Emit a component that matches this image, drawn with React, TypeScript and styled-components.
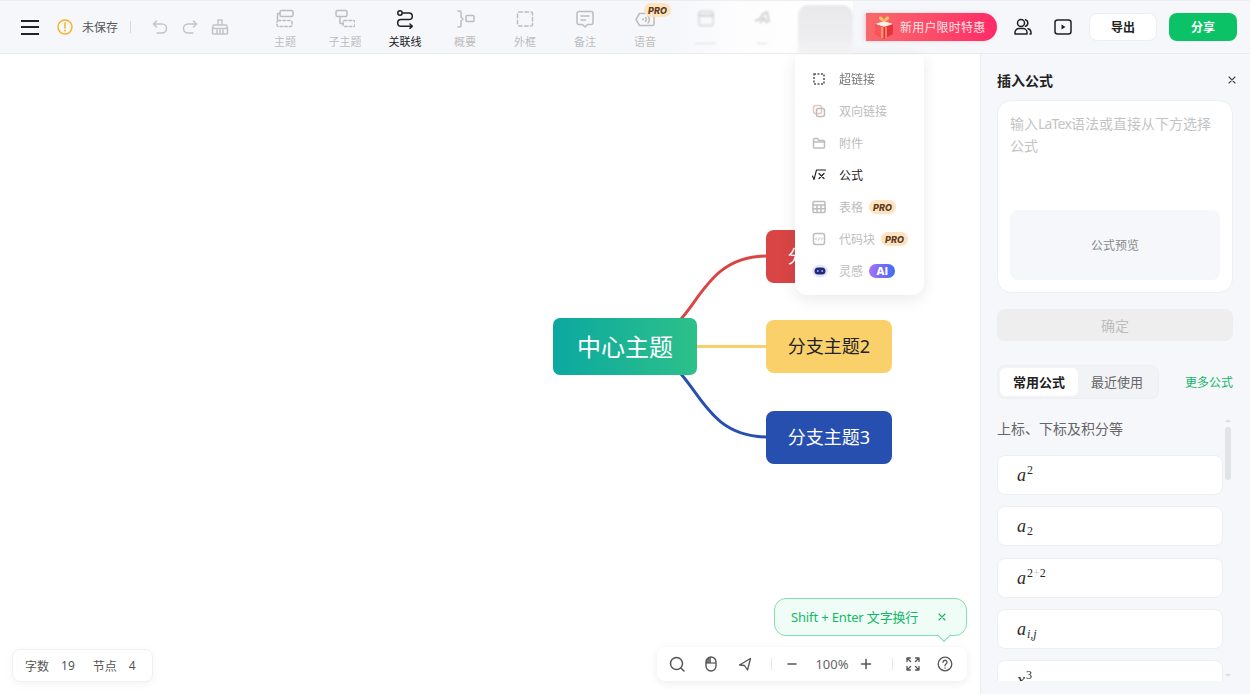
import { ReactNode } from "react";
import styled, { createGlobalStyle } from "styled-components";

const GlobalStyle = createGlobalStyle`
  html, body {
    margin: 0;
    padding: 0;
    background: #fff;
  }
  * {
    box-sizing: border-box;
  }
  body {
    font-family: "Noto Sans", "Noto Sans CJK SC", sans-serif;
    color: #222;
  }
`;

const Page = styled.div`
  width: 1250px;
  height: 694px;
  display: flex;
  flex-direction: column;
  overflow: hidden;
`;

const Header = styled.header`
  height: 54px;
  flex: none;
  display: flex;
  align-items: stretch;
  padding-right: 13px;
  background: #f6f7fb;
  border-top: 1px solid #eceef1;
  border-bottom: 1px solid #e9ebef;
`;

const LeftGroup = styled.div`
  width: 255px;
  flex: none;
  display: flex;
  align-items: center;
  padding: 0 0 0 21px;
`;

const MenuButton = styled.div`
  width: 18px;
  height: 15px;
  margin-right: 18px;
  border-top: 2px solid #222;
  border-bottom: 2px solid #222;
  position: relative;

  &::after {
    content: "";
    position: absolute;
    left: 0;
    right: 0;
    top: 4.5px;
    height: 2px;
    background: #222;
  }
`;

const SaveText = styled.span`
  font-size: 12px;
  color: #555;
  margin-left: 9px;
`;

const Divider = styled.span`
  width: 1px;
  height: 12px;
  background: #d5d7dc;
  margin: 0 20px 0 12px;
`;

const HistoryIcons = styled.div`
  display: flex;
  gap: 12px;
  color: #c4c4c4;
`;

const Tools = styled.div`
  display: flex;
`;

const ToolItem = styled.div<{ $active?: boolean; $blurred?: boolean }>`
  width: ${(p) => (p.$blurred ? "57px" : "60px")};
  flex: none;
  position: relative;
  display: flex;
  flex-direction: column;
  align-items: center;
  padding-top: 8px;
  color: ${(p) => (p.$active ? "#222" : "#bdbdbd")};
  font-size: 11px;
  line-height: 16px;
  filter: ${(p) => (p.$blurred ? "blur(1.2px)" : "none")};
  opacity: ${(p) => (p.$blurred ? 0.6 : 1)};

  svg {
    margin-bottom: 5px;
  }
`;

const ToolLabel = styled.span`
  display: block;
`;

const ProBadge = styled.span`
  display: inline-flex;
  align-items: center;
  justify-content: center;
  width: 27px;
  height: 14px;
  border-radius: 7px;
  background: #fde3c0;
  color: #5b3a1e;
  font-size: 9px;
  font-style: italic;
  font-weight: 800;
  line-height: 1;
  font-family: "Inter", "Noto Sans", sans-serif;
`;

const FloatingBadge = styled(ProBadge)`
  position: absolute;
  top: 2px;
  left: 29px;
`;

const FadeZone = styled.div`
  display: flex;
  width: 178px;
  flex: none;
  background: linear-gradient(90deg, #f6f7fb 0%, #fdfdfe 38%, #fff 100%);
`;

const FadeItems = styled.div`
  display: flex;
  width: 123px;
  flex: none;
  padding-left: 2px;
`;

const GhostTile = styled.div`
  width: 55px;
  height: 49px;
  margin-top: 4px;
  flex: none;
  border-radius: 10px 10px 0 0;
  background: linear-gradient(180deg, #e9e9eb 0%, #eeeef0 70%, #f6f6f7 100%);
  filter: blur(1px);
`;

const RightGroup = styled.div`
  margin-left: auto;
  display: flex;
  align-items: center;
`;

const Promo = styled.div`
  width: 131px;
  height: 28px;
  position: relative;
  display: flex;
  align-items: center;
  padding-left: 34px;
  border-radius: 0 14px 14px 0;
  background: linear-gradient(90deg, #f7696c 0%, #fd4f69 45%, #ff2a68 100%);
  box-shadow: -2px 0 4px rgba(247, 105, 108, 0.25);
  color: #ffe4e6;
  font-size: 12px;
  letter-spacing: 0.2px;
  white-space: nowrap;

  svg {
    position: absolute;
    left: 6px;
    top: 1px;
  }
`;

const IconSlot = styled.div`
  width: 40px;
  display: flex;
  justify-content: center;
  color: #222;
`;

const HeaderIcons = styled.div`
  display: flex;
  margin: 0 6px 0 6px;
`;

const ExportButton = styled.button`
  width: 68px;
  height: 28px;
  border: 1px solid #eceef1;
  border-radius: 8px;
  background: #fff;
  color: #222;
  font: 700 12px "Noto Sans", "Noto Sans CJK SC", sans-serif;
  padding: 0;
`;

const ShareButton = styled(ExportButton)`
  margin-left: 12px;
  border: none;
  background: #0bc267;
  color: #fff;
`;

const Body = styled.main`
  flex: 1;
  min-height: 0;
  display: flex;
`;

const Canvas = styled.section`
  flex: 1;
  position: relative;
  background: #fff;
`;

const Connectors = styled.svg`
  position: absolute;
  left: 0;
  top: 0;
  width: 980px;
  height: 640px;
`;

const CenterNode = styled.div`
  position: absolute;
  left: 553px;
  top: 264px;
  width: 144px;
  height: 57px;
  padding-bottom: 2px;
  border-radius: 7px;
  display: flex;
  align-items: center;
  justify-content: center;
  background: linear-gradient(90deg, #0ca8a1 0%, #2dc089 100%);
  color: #fff;
  font-size: 24px;
`;

const BranchNode = styled.div<{ $top: number; $bg: string; $fg: string }>`
  position: absolute;
  left: 766px;
  top: ${(p) => p.$top}px;
  width: 126px;
  height: 53px;
  padding-bottom: 3px;
  border-radius: 8px;
  display: flex;
  align-items: center;
  justify-content: center;
  background: ${(p) => p.$bg};
  color: ${(p) => p.$fg};
  font-size: 18px;
`;

const StatusBar = styled.div`
  position: absolute;
  left: 12px;
  bottom: 12px;
  height: 33px;
  width: 141px;
  display: flex;
  align-items: center;
  padding-left: 12px;
  background: #fff;
  border: 1px solid #f0f1f3;
  border-radius: 8px;
  box-shadow: 0 2px 8px rgba(0, 0, 0, 0.05);
  font-size: 12px;
  color: #555;
  white-space: nowrap;
`;

const StatValue = styled.span`
  margin: 0 18px 0 12px;
`;

const ZoomBar = styled.div`
  position: absolute;
  left: 657px;
  top: 593px;
  width: 310px;
  height: 34px;
  display: flex;
  align-items: center;
  padding-left: 12px;
  background: #fff;
  border-radius: 8px;
  box-shadow: 0 2px 10px rgba(0, 0, 0, 0.08);
  color: #555;
`;

const ZoomIcon = styled.span<{ $gap?: number }>`
  display: flex;
  flex: none;
  width: 16px;
  justify-content: center;
  margin-right: ${(p) => p.$gap ?? 18}px;
`;

const ZoomDivider = styled.span`
  width: 1px;
  height: 12px;
  flex: none;
  background: #e4e5e8;
  margin-right: 12px;
`;

const ZoomValue = styled.span`
  width: 36px;
  flex: none;
  margin-right: 8px;
  font-size: 13px;
  color: #666;
  text-align: center;
`;

const Hint = styled.div`
  position: absolute;
  left: 774px;
  top: 544px;
  width: 193px;
  height: 38px;
  display: flex;
  align-items: center;
  justify-content: space-between;
  padding: 0 20px 0 16px;
  background: #effdf6;
  border: 1px solid #82dfb0;
  border-radius: 12px;
  color: #14b76a;
  font-size: 13px;
  letter-spacing: -0.15px;
  white-space: nowrap;

  span {
    margin-top: -2px;
  }

  &::after {
    content: "";
    position: absolute;
    left: 164px;
    bottom: -5px;
    width: 9px;
    height: 9px;
    transform: rotate(45deg);
    background: #effdf6;
    border-right: 1px solid #82dfb0;
    border-bottom: 1px solid #82dfb0;
  }
`;

const Dropdown = styled.div`
  position: absolute;
  left: 795px;
  top: 1px;
  width: 129px;
  height: 240px;
  padding: 8px 0;
  background: #fff;
  border-radius: 0 0 12px 12px;
  box-shadow: 0 4px 16px rgba(0, 0, 0, 0.09);
`;

const DropItem = styled.div<{ $active?: boolean; $blurred?: boolean }>`
  height: 32px;
  display: flex;
  align-items: center;
  padding-left: 17px;
  font-size: 12px;
  color: ${(p) => (p.$active ? "#222" : "#bdbdbd")};

  > svg {
    flex: none;
    margin-right: 13px;
    ${(p) => p.$blurred && "filter: blur(0.5px);"}
  }
`;

const DropLabel = styled.span<{ $blurred?: boolean }>`
  margin-right: 6px;
  ${(p) => p.$blurred && "filter: blur(0.7px); color: #777;"}
`;

const AiBadge = styled.span`
  display: inline-flex;
  align-items: center;
  justify-content: center;
  width: 26px;
  height: 14px;
  border-radius: 7px;
  background: linear-gradient(90deg, #a871f5 0%, #3f6cf6 100%);
  color: #fff;
  font: 800 11px "Inter", sans-serif;
`;

const Panel = styled.aside`
  width: 270px;
  flex: none;
  display: flex;
  flex-direction: column;
  padding: 0 17px 13px 16px;
  background: #f6f7fb;
  border-left: 1px solid #ebecf0;
`;

const PanelHead = styled.div`
  height: 46px;
  flex: none;
  display: flex;
  align-items: center;
  justify-content: space-between;
  padding-top: 6px;
`;

const PanelTitle = styled.h2`
  margin: 0;
  font-size: 14px;
  font-weight: 700;
  color: #222;
`;

const CloseMark = styled.span`
  display: flex;
  color: #444;
  margin: 0 -3px 0 0;
`;

const EditorCard = styled.div`
  height: 193px;
  flex: none;
  display: flex;
  flex-direction: column;
  justify-content: space-between;
  padding: 12px;
  background: #fff;
  border: 1px solid #eeeff2;
  border-radius: 14px;
`;

const Placeholder = styled.div`
  font-size: 14px;
  line-height: 22px;
  color: #c4c4c4;
`;

const LatinRun = styled.span`
  letter-spacing: -0.8px;
`;

const Preview = styled.div`
  height: 70px;
  display: flex;
  align-items: center;
  justify-content: center;
  background: #f6f7fb;
  border-radius: 8px;
  font-size: 12px;
  color: #8a8a8a;
`;

const ConfirmButton = styled.button`
  height: 32px;
  flex: none;
  margin-top: 16px;
  border: none;
  border-radius: 8px;
  background: #eeeeee;
  color: #bdbdbd;
  font: 14px "Noto Sans", "Noto Sans CJK SC", sans-serif;
`;

const TabsRow = styled.div`
  margin-top: 24px;
  flex: none;
  display: flex;
  align-items: center;
  justify-content: space-between;
`;

const Tabs = styled.div`
  width: 162px;
  height: 34px;
  display: flex;
  padding: 2px;
  background: #f2f3f6;
  border: 1px solid #eeeff2;
  border-radius: 8px;
`;

const Tab = styled.div<{ $active?: boolean }>`
  width: 78px;
  display: flex;
  align-items: center;
  justify-content: center;
  padding-bottom: 1px;
  border-radius: 6px;
  font-size: 13px;
  font-weight: ${(p) => (p.$active ? 700 : 400)};
  color: ${(p) => (p.$active ? "#222" : "#666")};
  background: ${(p) => (p.$active ? "#fff" : "transparent")};
`;

const MoreLink = styled.span`
  font-size: 12px;
  color: #12b76a;
`;

const FormulaArea = styled.div`
  flex: 1;
  min-height: 0;
  position: relative;
  overflow: hidden;
  margin-top: 20px;
`;

const SectionTitle = styled.div`
  font-size: 14px;
  line-height: 20px;
  color: #666;
  margin-bottom: 16px;
`;

const FormulaList = styled.div`
  width: 226px;
  display: flex;
  flex-direction: column;
  gap: 11.3px;
`;

const FormulaCard = styled.div`
  height: 40px;
  flex: none;
  display: flex;
  align-items: baseline;
  padding: 7px 0 0 19px;
  background: #fff;
  border: 1px solid #eeeff2;
  border-radius: 8px;
  font-family: "Liberation Serif", serif;
  font-size: 18px;
  line-height: 24px;
  color: #2a2a2a;
`;

const MathVar = styled.i`
  font-style: italic;
`;

const Sup = styled.span`
  font-size: 12px;
  line-height: 0;
  position: relative;
  top: -7px;
  margin-left: 1px;
`;

const Sub = styled.span`
  font-size: 12px;
  line-height: 0;
  position: relative;
  top: 3px;
  margin-left: 1px;
`;

const FaintPlus = styled.span`
  color: #ccc;
`;

const ScrollTrack = styled.div`
  position: absolute;
  top: 0;
  right: 2px;
  width: 6px;
  height: 100%;
`;

const ScrollThumb = styled.div`
  position: absolute;
  top: 8px;
  width: 6px;
  height: 53px;
  border-radius: 3px;
  background: #e2e3e6;
`;

const ScrollArrow = styled.div<{ $down?: boolean }>`
  position: absolute;
  left: 0;
  ${(p) => (p.$down ? "bottom: 4px;" : "top: 0;")}
  width: 0;
  height: 0;
  border-left: 3px solid transparent;
  border-right: 3px solid transparent;
  ${(p) =>
    p.$down ? "border-top: 3px solid #dcdde0;" : "border-bottom: 3px solid #dcdde0;"}
`;

type IconProps = { size?: number; children: ReactNode };

const Icon = ({ size = 20, children }: IconProps) => (
  <svg
    width={size}
    height={size}
    viewBox={`0 0 ${size} ${size}`}
    fill="none"
    stroke="currentColor"
    strokeWidth="1.5"
    strokeLinecap="round"
    strokeLinejoin="round"
  >
    {children}
  </svg>
);

const toolItems: { label: string; active?: boolean; pro?: boolean; icon: ReactNode }[] = [
  {
    label: "主题",
    icon: (
      <Icon>
        <rect x="5" y="1.5" width="13" height="6" rx="1.5" />
        <rect x="2" y="11.5" width="15" height="6" rx="1.5" strokeDasharray="2.5 2" />
        <path d="M5 4.5H2.500V11" />
      </Icon>
    ),
  },
  {
    label: "子主题",
    icon: (
      <Icon>
        <rect x="1" y="1.500" width="11" height="6" rx="1.500" />
        <rect x="8" y="11.500" width="12" height="6" rx="1.500" strokeDasharray="2.500 2" />
        <path d="M5 7.500V14.500H8" />
      </Icon>
    ),
  },
  {
    label: "关联线",
    active: true,
    icon: (
      <Icon>
        <circle cx="5" cy="4" r="2.200" />
        <path d="M7.200 4H14a3.300 3.300 0 0 1 0 6.600H6a3.300 3.300 0 0 0 0 6.600h11" />
        <path d="M15 15l2.200 2.200L15 19.400" />
      </Icon>
    ),
  },
  {
    label: "概要",
    icon: (
      <Icon>
        <path d="M3 2h1.500a1.500 1.500 0 0 1 1.500 1.500V8l2 2-2 2v4.500a1.500 1.500 0 0 1-1.500 1.500H3" />
        <rect x="11" y="6.500" width="8" height="6" rx="1" />
      </Icon>
    ),
  },
  {
    label: "外框",
    icon: (
      <Icon>
        <rect x="2.500" y="3" width="15" height="14" rx="1.500" strokeDasharray="3.500 2.500" />
      </Icon>
    ),
  },
  {
    label: "备注",
    icon: (
      <Icon>
        <path d="M4 2.500h12a2 2 0 0 1 2 2v9a2 2 0 0 1-2 2h-3.500L10 18l-2.500-2.500H4a2 2 0 0 1-2-2v-9a2 2 0 0 1 2-2z" />
        <path d="M6 7h8M6 11h4.500" />
      </Icon>
    ),
  },
  {
    label: "语音",
    pro: true,
    icon: (
      <Icon>
        <path d="M4.500 4.500h13a1.500 1.500 0 0 1 1.500 1.500v9a1.500 1.500 0 0 1-1.500 1.500h-13L1 10.500z" />
        <circle cx="8" cy="10.500" r="0.400" />
        <path d="M10.500 8.500a3 3 0 0 1 0 4M13 7a5.500 5.500 0 0 1 0 7" />
      </Icon>
    ),
  },
];

const dropItems: {
  label: string;
  active?: boolean;
  blurred?: boolean;
  badge?: "pro" | "ai";
  icon: ReactNode;
}[] = [
  {
    label: "超链接",
    blurred: true,
    icon: (
      <svg width="14" height="14" viewBox="0 0 14 14" fill="none" stroke="#555" strokeWidth="1.500">
        <rect x="2" y="2" width="10" height="10" strokeDasharray="2 1.500" />
      </svg>
    ),
  },
  {
    label: "双向链接",
    icon: (
      <Icon size={14}>
        <rect x="1.500" y="1.500" width="8" height="8" rx="2" stroke="#e6c9b5" />
        <rect x="4.500" y="4.500" width="8" height="8" rx="2" />
      </Icon>
    ),
  },
  {
    label: "附件",
    icon: (
      <Icon size={14}>
        <path d="M1.500 3.500a1 1 0 0 1 1-1h3l1.500 2h4.500a1 1 0 0 1 1 1v5.500a1 1 0 0 1-1 1h-9a1 1 0 0 1-1-1z" />
        <path d="M1.500 6h11" />
      </Icon>
    ),
  },
  {
    label: "公式",
    active: true,
    icon: (
      <Icon size={14}>
        <path d="M0.500 8l1.500 3.500L4.500 2H14" strokeWidth="1.100" />
        <path d="M7 5.500l5 5M12 5.500l-5 5" strokeWidth="1.200" />
      </Icon>
    ),
  },
  {
    label: "表格",
    badge: "pro",
    icon: (
      <Icon size={14}>
        <rect x="1" y="1.500" width="12" height="11" rx="1" />
        <path d="M1 5h12M1 8.800h12M5 5v7.500M9 5v7.500" />
      </Icon>
    ),
  },
  {
    label: "代码块",
    badge: "pro",
    icon: (
      <Icon size={14}>
        <rect x="1.500" y="1.500" width="11" height="11" rx="2" />
        <path d="M4.500 6L3.500 7l1 1M9.500 6l1 1-1 1M7.700 5.800L6.400 8.200" strokeWidth="1" />
      </Icon>
    ),
  },
  {
    label: "灵感",
    badge: "ai",
    icon: (
      <svg width="16" height="14" viewBox="0 0 16 14" style={{ marginRight: 11 }}>
        <ellipse cx="8" cy="7" rx="8" ry="6.500" fill="#e6e6fa" />
        <rect x="2.500" y="3.500" width="11" height="7" rx="3.500" fill="#232a7c" />
        <circle cx="5.800" cy="7" r="1" fill="#8fb0ff" />
        <circle cx="10.200" cy="7" r="1" fill="#8fb0ff" />
      </svg>
    ),
  },
];

const App = () => {
  return (
    <Page>
      <GlobalStyle />
      <Header>
        <LeftGroup>
          <MenuButton />
          <svg width="16" height="16" viewBox="0 0 16 16" fill="none">
            <circle cx="8" cy="8" r="7" stroke="#f5b21f" strokeWidth="1.400" />
            <path d="M8 4v5" stroke="#f5b21f" strokeWidth="1.500" strokeLinecap="round" />
            <circle cx="8" cy="11.500" r="0.900" fill="#f5b21f" />
          </svg>
          <SaveText>未保存</SaveText>
          <Divider />
          <HistoryIcons>
            <Icon size={18}>
              <path d="M5.500 3L2.500 6l3 3" />
              <path d="M3 6h8a4.500 4.500 0 0 1 0 9H6" />
            </Icon>
            <Icon size={18}>
              <path d="M12.500 3l3 3-3 3" />
              <path d="M15 6H7a4.500 4.500 0 0 0 0 9h5" />
            </Icon>
            <Icon size={18}>
              <path d="M7 2h4v5H7zM2.500 7h13l1 3v6h-15v-6zM6 12v4M9 12v4M12 12v4M2 10.500h14" />
            </Icon>
          </HistoryIcons>
        </LeftGroup>
        <Tools>
          {toolItems.map((t) => (
            <ToolItem key={t.label} $active={t.active}>
              {t.icon}
              {t.pro && <FloatingBadge>PRO</FloatingBadge>}
              <ToolLabel>{t.label}</ToolLabel>
            </ToolItem>
          ))}
        </Tools>
        <FadeZone>
          <FadeItems>
            <ToolItem $blurred>
              <Icon>
                <rect x="3" y="2.500" width="14" height="14" rx="1.500" />
                <path d="M3 6.500h14" strokeWidth="2.500" />
              </Icon>
              <ToolLabel>——</ToolLabel>
            </ToolItem>
            <ToolItem $blurred>
              <svg width="20" height="20" viewBox="0 0 20 20" fill="none" stroke="#999" strokeWidth="1.500">
                <path d="M2 12l5-2 3-5 4-2 2 10M7 14l4-5 3 5" />
              </svg>
              <ToolLabel>—</ToolLabel>
            </ToolItem>
          </FadeItems>
          <GhostTile />
        </FadeZone>
        <RightGroup>
          <Promo>
            <svg width="24" height="26" viewBox="0 0 24 26">
              <path d="M3 10l9-3 9 3v10l-9 5-9-5z" fill="#e8323c" />
              <path d="M3 10l9 3 9-3-9-3z" fill="#fff1e0" />
              <path d="M12 13v12l-9-5V10z" fill="#f9545a" />
              <path
                d="M8 2.500c2 0 4 2 4 4.500-3 0-5-1-5-3 0-1 .5-1.500 1-1.500zM16 2.500c-2 0-4 2-4 4.500 3 0 5-1 5-3 0-1-.5-1.500-1-1.500z"
                fill="#ffc857"
              />
              <path d="M10 13v11M14 13v11" stroke="#ffd38a" strokeWidth="1" />
            </svg>
            新用户限时特惠
          </Promo>
          <HeaderIcons>
            <IconSlot>
              <Icon>
                <circle cx="8" cy="6" r="3.500" />
                <path d="M2 17v-1.500a4 4 0 0 1 4-4h4a4 4 0 0 1 4 4V17z" />
                <path d="M12.500 2.700a3.500 3.500 0 0 1 0 6.600M15 11.700a4 4 0 0 1 3 3.800V17h-1" />
              </Icon>
            </IconSlot>
            <IconSlot>
              <svg width="20" height="20" viewBox="0 0 20 20" fill="none">
                <rect x="2" y="3" width="16" height="14" rx="2.500" stroke="#222" strokeWidth="1.500" />
                <path d="M8.500 7.500l4 2.500-4 2.500z" fill="#222" />
              </svg>
            </IconSlot>
          </HeaderIcons>
          <ExportButton>导出</ExportButton>
          <ShareButton>分享</ShareButton>
        </RightGroup>
      </Header>
      <Body>
        <Canvas>
          <Connectors viewBox="0 0 980 640" fill="none" strokeWidth="3">
            <path d="M681 265C703 240 715 203 766 202" stroke="#d94545" />
            <path d="M697 292.500H766" stroke="#fad06a" />
            <path d="M681 320C703 345 715 382 766 383" stroke="#274fb0" />
          </Connectors>
          <CenterNode>中心主题</CenterNode>
          <BranchNode $top={176} $bg="#d94545" $fg="#fff">分支主题1</BranchNode>
          <BranchNode $top={266} $bg="#fad06a" $fg="#222">分支主题2</BranchNode>
          <BranchNode $top={357} $bg="#274fb0" $fg="#fff">分支主题3</BranchNode>
          <Dropdown>
            {dropItems.map((d) => (
              <DropItem key={d.label} $active={d.active} $blurred={d.blurred}>
                {d.icon}
                <DropLabel $blurred={d.blurred}>{d.label}</DropLabel>
                {d.badge === "pro" && <ProBadge>PRO</ProBadge>}
                {d.badge === "ai" && <AiBadge>AI</AiBadge>}
              </DropItem>
            ))}
          </Dropdown>
          <Hint>
            <span>Shift + Enter 文字换行</span>
            <Icon size={8}>
              <path d="M1 1l6 6M7 1L1 7" strokeWidth="1.100" />
            </Icon>
          </Hint>
          <ZoomBar>
            <ZoomIcon>
              <Icon size={16}>
                <circle cx="7.500" cy="7.500" r="6" />
                <path d="M12 12l3 3" />
              </Icon>
            </ZoomIcon>
            <ZoomIcon>
              <svg width="14" height="16" viewBox="0 0 14 16" fill="none">
                <path d="M2 7V6a5 5 0 0 1 5-5v6z" fill="#777" />
                <rect x="2" y="1" width="10" height="14" rx="5" stroke="#555" strokeWidth="1.400" />
                <path d="M2 7h10" stroke="#555" strokeWidth="1.200" />
              </svg>
            </ZoomIcon>
            <ZoomIcon>
              <Icon size={14}>
                <path d="M12.500 1.500L1.500 8l5 .5 3 4.500z" strokeWidth="1.300" />
              </Icon>
            </ZoomIcon>
            <ZoomDivider />
            <ZoomIcon $gap={14}>
              <Icon size={12}>
                <path d="M2 6h8" />
              </Icon>
            </ZoomIcon>
            <ZoomValue>100%</ZoomValue>
            <ZoomIcon>
              <Icon size={12}>
                <path d="M1.500 6h9M6 1.500v9" />
              </Icon>
            </ZoomIcon>
            <ZoomDivider />
            <ZoomIcon $gap={16}>
              <Icon size={14}>
                <path
                  d="M1 4.500V1h3.500M13 4.500V1H9.500M1 9.500V13h3.500M13 9.500V13H9.500M1.500 1.500l3 3M12.500 1.500l-3 3M1.500 12.500l3-3M12.500 12.500l-3-3"
                  strokeWidth="1.300"
                />
              </Icon>
            </ZoomIcon>
            <ZoomIcon>
              <Icon size={16}>
                <circle cx="8" cy="8" r="6.800" strokeWidth="1.300" />
                <path d="M6 6.300a2 2 0 1 1 3 1.700c-.7.400-1 .8-1 1.700" strokeWidth="1.300" />
                <path d="M8 12v.1" />
              </Icon>
            </ZoomIcon>
          </ZoomBar>
          <StatusBar>
            字数<StatValue>19</StatValue>节点<StatValue>4</StatValue>
          </StatusBar>
        </Canvas>
        <Panel>
          <PanelHead>
            <PanelTitle>插入公式</PanelTitle>
            <CloseMark>
              <Icon size={8}>
                <path d="M1 1l6 6M7 1L1 7" strokeWidth="1.100" />
              </Icon>
            </CloseMark>
          </PanelHead>
          <EditorCard>
            <Placeholder>
              输入<LatinRun>LaTex</LatinRun>语法或直接从下方选择公式
            </Placeholder>
            <Preview>公式预览</Preview>
          </EditorCard>
          <ConfirmButton>确定</ConfirmButton>
          <TabsRow>
            <Tabs>
              <Tab $active>常用公式</Tab>
              <Tab>最近使用</Tab>
            </Tabs>
            <MoreLink>更多公式</MoreLink>
          </TabsRow>
          <FormulaArea>
            <SectionTitle>上标、下标及积分等</SectionTitle>
            <FormulaList>
              <FormulaCard>
                <MathVar>a</MathVar>
                <Sup>2</Sup>
              </FormulaCard>
              <FormulaCard>
                <MathVar>a</MathVar>
                <Sub>2</Sub>
              </FormulaCard>
              <FormulaCard>
                <MathVar>a</MathVar>
                <Sup>
                  2<FaintPlus>+</FaintPlus>2
                </Sup>
              </FormulaCard>
              <FormulaCard>
                <MathVar>a</MathVar>
                <Sub>
                  <MathVar>i,j</MathVar>
                </Sub>
              </FormulaCard>
              <FormulaCard>
                <MathVar>x</MathVar>
                <Sup>3</Sup>
              </FormulaCard>
            </FormulaList>
            <ScrollTrack>
              <ScrollArrow />
              <ScrollThumb />
              <ScrollArrow $down />
            </ScrollTrack>
          </FormulaArea>
        </Panel>
      </Body>
    </Page>
  );
};

export default App;
